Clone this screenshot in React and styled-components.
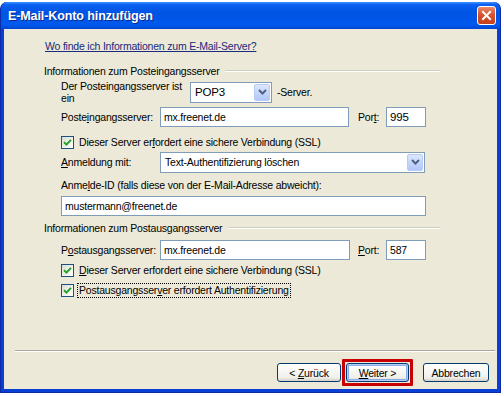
import styled, { createGlobalStyle } from "styled-components";

const GlobalStyle = createGlobalStyle`
  html, body {
    margin: 0;
    padding: 0;
    background: #ffffff;
  }
  body {
    font-family: "Liberation Sans", Arial, sans-serif;
    font-size: 10.5px;
    letter-spacing: -0.2px;
    color: #000000;
  }
`;

const Window = styled.div`
  width: 501px;
  height: 391px;
  margin-top: 2px;
  box-sizing: border-box;
  display: flex;
  flex-direction: column;
  background: #0a3fd6;
  border-radius: 7px 7px 0 0;
  border: 1px solid #0a2aa8;
  border-top: none;
`;

const TitleBar = styled.div`
  height: 27px;
  flex-shrink: 0;
  display: flex;
  align-items: center;
  justify-content: space-between;
  padding: 0 4px 0 7px;
  border-radius: 7px 7px 0 0;
  background: linear-gradient(
    to bottom,
    #3d95ff 0%,
    #0a5ff0 10%,
    #0054e3 40%,
    #0058ee 85%,
    #0046d0 100%
  );
`;

const Title = styled.span`
  color: #ffffff;
  font-weight: bold;
  font-size: 12.5px;
  letter-spacing: -0.1px;
  text-shadow: 1px 1px 0 #0a2a8a;
`;

const CloseButton = styled.div`
  width: 19px;
  height: 19px;
  box-sizing: border-box;
  border: 1px solid #ffffff;
  border-radius: 3px;
  background: linear-gradient(to bottom, #e88a6a, #d8532e 45%, #c2401c);
  display: flex;
  align-items: center;
  justify-content: center;
`;

const Body = styled.div`
  flex: 1;
  margin: 0 3px 3px 3px;
  background: #ece9d8;
  display: flex;
  flex-direction: column;
  padding-left: 40px;
`;

const HelpLink = styled.a`
  display: block;
  margin: 10px 0 0 1px;
  height: 14px;
  line-height: 14px;
  color: #1a2a7c;
  text-decoration: underline;
`;

const GroupHeader = styled.div`
  display: flex;
  align-items: center;
  height: 14px;
  width: 396px;
  margin-top: ${(p) => p.$mt}px;

  &::after {
    content: "";
    flex: 1;
    margin-left: 6px;
    border-top: 1px solid #d0d0bf;
    border-bottom: 1px solid #ffffff;
  }
`;

const Group = styled.div`
  padding-left: 17px;
  display: flex;
  flex-direction: column;
`;

const Row = styled.div`
  display: flex;
  align-items: center;
  height: ${(p) => p.$h}px;
  margin-top: ${(p) => p.$mt}px;
`;

const FieldLabel = styled.span`
  width: ${(p) => p.$w}px;
  flex-shrink: 0;
  line-height: 12px;
`;

const Key = styled.span`
  text-decoration: underline;
`;

const TextBox = styled.div`
  width: ${(p) => p.$w}px;
  height: ${(p) => p.$h || 20}px;
  box-sizing: border-box;
  border: 1px solid #7f9db9;
  background: #ffffff;
  padding-left: 3px;
  display: flex;
  align-items: center;
  font-size: ${(p) => (p.$big ? 11.5 : 10.5)}px;
`;

const Combo = styled.div`
  width: ${(p) => p.$w}px;
  height: 21px;
  box-sizing: border-box;
  border: 1px solid #7f9db9;
  background: #ffffff;
  display: flex;
  align-items: center;
  justify-content: space-between;
  padding: 1px;
  font-size: ${(p) => (p.$big ? 11.5 : 10.5)}px;
`;

const ComboText = styled.span`
  padding-left: 3px;
`;

const ComboArrow = styled.div`
  width: 16px;
  height: 17px;
  box-sizing: border-box;
  border: 1px solid #b8cbf4;
  border-radius: 2px;
  background: linear-gradient(to bottom, #dce7fd, #c1d3fb 60%, #b1c7f7);
  display: flex;
  align-items: center;
  justify-content: center;
`;

const PortLabel = styled.span`
  margin-left: ${(p) => p.$ml}px;
  width: ${(p) => p.$w}px;
  flex-shrink: 0;
`;

const SideText = styled.span`
  margin-left: 5px;
`;

const CheckBox = styled.div`
  width: 13px;
  height: 13px;
  box-sizing: border-box;
  border: 1px solid #1c5180;
  background: linear-gradient(135deg, #dcdcd7, #ffffff);
  display: flex;
  align-items: center;
  justify-content: center;
  flex-shrink: 0;
`;

const CheckText = styled.span`
  margin-left: 3px;
  padding: 0 1px;
  line-height: 13px;
  border: 1px ${(p) => (p.$focus ? "dotted #000000" : "solid transparent")};
`;

const Footer = styled.div`
  margin-top: auto;
  margin-left: -29px;
  display: flex;
  flex-direction: column;
`;

const Separator = styled.div`
  width: 480px;
  border-top: 1px solid #aca899;
  border-bottom: 1px solid #ffffff;
`;

const ButtonRow = styled.div`
  display: flex;
  justify-content: flex-end;
  padding: 11px 8px 7px 0;
  margin-left: -12px;
`;

const Button = styled.div`
  position: relative;
  width: ${(p) => p.$w}px;
  height: 19px;
  box-sizing: border-box;
  margin-left: ${(p) => p.$ml}px;
  border: 1px solid #003c74;
  border-radius: 3px;
  background: linear-gradient(to bottom, #ffffff, #f0efea 80%, #d6d0c5);
  display: flex;
  align-items: center;
  justify-content: center;
  box-shadow: ${(p) =>
    p.$default ? "inset 0 0 0 1px #b7cdf4, inset 0 0 0 2px #89adec" : "none"};

  &::after {
    content: "";
    display: ${(p) => (p.$mark ? "block" : "none")};
    position: absolute;
    inset: -5px -5px -5px -5px;
    border: 3px solid #c80000;
    border-radius: 1px;
  }
`;

function Check() {
  return (
    <CheckBox>
      <svg width="9" height="9" viewBox="0 0 9 9">
        <path d="M1 4.2 L3.4 6.6 L8 1.8" fill="none" stroke="#21a121" strokeWidth="1.9" />
      </svg>
    </CheckBox>
  );
}

function Arrow() {
  return (
    <ComboArrow>
      <svg width="9" height="6" viewBox="0 0 9 6">
        <path d="M1 1 L4.5 4.5 L8 1" fill="none" stroke="#4d6185" strokeWidth="2" />
      </svg>
    </ComboArrow>
  );
}

export default function App() {
  return (
    <>
      <GlobalStyle />
      <Window>
        <TitleBar>
          <Title>E-Mail-Konto hinzufügen</Title>
          <CloseButton>
            <svg width="11" height="11" viewBox="0 0 11 11">
              <path d="M2 2 L9 9 M9 2 L2 9" stroke="#ffffff" strokeWidth="2" strokeLinecap="square" />
            </svg>
          </CloseButton>
        </TitleBar>
        <Body>
          <HelpLink>Wo finde ich Informationen zum E-Mail-Server?</HelpLink>

          <GroupHeader $mt={11}>Informationen zum Posteingangsserver</GroupHeader>
          <Group>
            <Row $h={22} $mt={3}>
              <FieldLabel $w={129}>
                Der Posteingangsserver ist
                <br />
                ein
              </FieldLabel>
              <Combo $w={82} $big>
                <ComboText>POP3</ComboText>
                <Arrow />
              </Combo>
              <SideText>-Server.</SideText>
            </Row>
            <Row $h={20} $mt={4}>
              <FieldLabel $w={99}>
                Poste<Key>i</Key>ngangsserver:
              </FieldLabel>
              <TextBox $w={189}>mx.freenet.de</TextBox>
              <PortLabel $ml={9} $w={28}>
                Por<Key>t</Key>:
              </PortLabel>
              <TextBox $w={40} $big>
                995
              </TextBox>
            </Row>
            <Row $h={16} $mt={7}>
              <Check />
              <CheckText>
                Dieser Server er<Key>f</Key>ordert eine sichere Verbindung (SSL)
              </CheckText>
            </Row>
            <Row $h={20} $mt={2}>
              <FieldLabel $w={99}>
                <Key>A</Key>nmeldung mit:
              </FieldLabel>
              <Combo $w={265}>
                <ComboText>Text-Authentifizierung löschen</ComboText>
                <Arrow />
              </Combo>
            </Row>
            <Row $h={14} $mt={6}>
              <span>
                Anme<Key>l</Key>de-ID (falls diese von der E-Mail-Adresse abweicht):
              </span>
            </Row>
            <Row $h={20} $mt={4}>
              <TextBox $w={365}>mustermann@freenet.de</TextBox>
            </Row>
          </Group>

          <GroupHeader $mt={5}>Informationen zum Postausgangsserver</GroupHeader>
          <Group>
            <Row $h={20} $mt={5}>
              <FieldLabel $w={99}>
                P<Key>o</Key>stausgangsserver:
              </FieldLabel>
              <TextBox $w={190}>mx.freenet.de</TextBox>
              <PortLabel $ml={8} $w={28}>
                <Key>P</Key>ort:
              </PortLabel>
              <TextBox $w={40}>587</TextBox>
            </Row>
            <Row $h={16} $mt={2}>
              <Check />
              <CheckText>
                <Key>D</Key>ieser Server erfordert eine sichere Verbindung (SSL)
              </CheckText>
            </Row>
            <Row $h={16} $mt={4}>
              <Check />
              <CheckText $focus>
                Postausgangsser<Key>v</Key>er erfordert Authentifizierung
              </CheckText>
            </Row>
          </Group>

          <Footer>
            <Separator />
            <ButtonRow>
              <Button $w={64}>
                <span>
                  &lt; <Key>Z</Key>urück
                </span>
              </Button>
              <Button $w={63} $ml={5} $default $mark>
                <span>
                  <Key>W</Key>eiter &gt;
                </span>
              </Button>
              <Button $w={66} $ml={14}>
                <span>Abbrechen</span>
              </Button>
            </ButtonRow>
          </Footer>
        </Body>
      </Window>
    </>
  );
}
